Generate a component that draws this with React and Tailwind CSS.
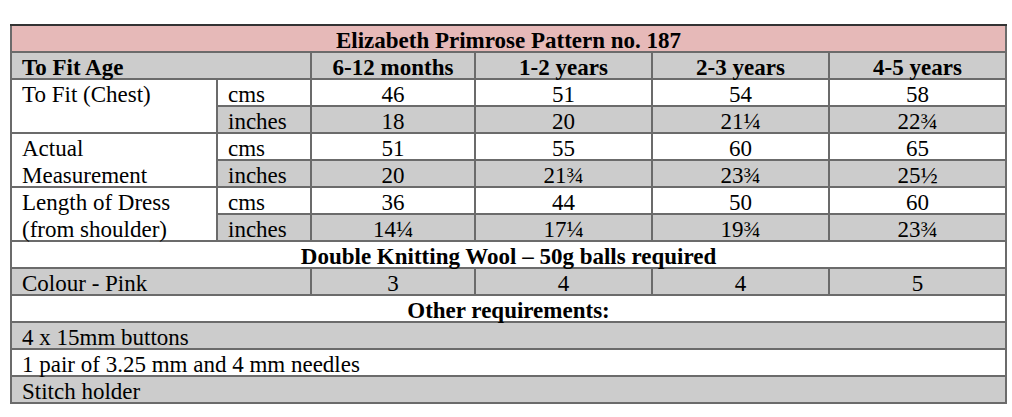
import React from 'react';

const ages = ['6-12 months', '1-2 years', '2-3 years', '4-5 years'];

const measurements = [
  { label: ['To Fit (Chest)'], cms: ['46', '51', '54', '58'], inches: ['18', '20', '21¼', '22¾'] },
  { label: ['Actual', 'Measurement'], cms: ['51', '55', '60', '65'], inches: ['20', '21¾', '23¾', '25½'] },
  { label: ['Length of Dress', '(from shoulder)'], cms: ['36', '44', '50', '60'], inches: ['14¼', '17¼', '19¾', '23¾'] },
];

const balls = ['3', '4', '4', '5'];

const others = ['4 x 15mm buttons', '1 pair of 3.25 mm and 4 mm needles', 'Stitch holder'];

const cell = 'pt-[1px] leading-[27px] whitespace-nowrap overflow-visible';

const App = () => {
  return (
    <div className="min-h-screen bg-white pt-[24px] pl-[10px] font-['Liberation_Serif',_'Times_New_Roman',_serif] text-[23px] text-black">
      <div className="w-[997px] border-t-2 border-[#333333]">
        <div className="grid grid-cols-[204px_92px_162px_175px_175px_175px] grid-rows-[repeat(14,25px)] gap-[2px] bg-[#6b6b6b] px-[2px] pb-[2px]">
          {/* title */}
          <div className={`${cell} col-span-6 bg-[#e6b9b8] text-center font-bold`}>
            Elizabeth Primrose Pattern no. 187
          </div>

          {/* header */}
          <div className={`${cell} col-span-2 bg-[#cccccc] pl-[10px] font-bold`}>To Fit Age</div>
          {ages.map((a) => (
            <div key={a} className={`${cell} bg-[#cccccc] text-center font-bold`}>{a}</div>
          ))}

          {/* measurements */}
          {measurements.map((m, i) => (
            <React.Fragment key={i}>
              <div className={`${cell} row-span-2 bg-white pl-[10px]`}>
                {m.label.map((l) => (
                  <div key={l}>{l}</div>
                ))}
              </div>
              <div className={`${cell} bg-white pl-[10px]`}>cms</div>
              {m.cms.map((v, j) => (
                <div key={j} className={`${cell} bg-white text-center`}>{v}</div>
              ))}
              <div className={`${cell} bg-[#cccccc] pl-[10px]`}>inches</div>
              {m.inches.map((v, j) => (
                <div key={j} className={`${cell} bg-[#cccccc] text-center`}>{v}</div>
              ))}
            </React.Fragment>
          ))}

          {/* wool */}
          <div className={`${cell} col-span-6 bg-white text-center font-bold`}>
            Double Knitting Wool – 50g balls required
          </div>
          <div className={`${cell} col-span-2 bg-[#cccccc] pl-[10px]`}>Colour - Pink</div>
          {balls.map((b, j) => (
            <div key={j} className={`${cell} bg-[#cccccc] text-center`}>{b}</div>
          ))}

          {/* other */}
          <div className={`${cell} col-span-6 bg-white text-center font-bold`}>Other requirements:</div>
          {others.map((o, j) => (
            <div
              key={o}
              className={`${cell} col-span-6 pl-[10px] ${j % 2 === 0 ? 'bg-[#cccccc]' : 'bg-white'}`}
            >
              {o}
            </div>
          ))}
        </div>
      </div>
    </div>
  );
};

export default App;
